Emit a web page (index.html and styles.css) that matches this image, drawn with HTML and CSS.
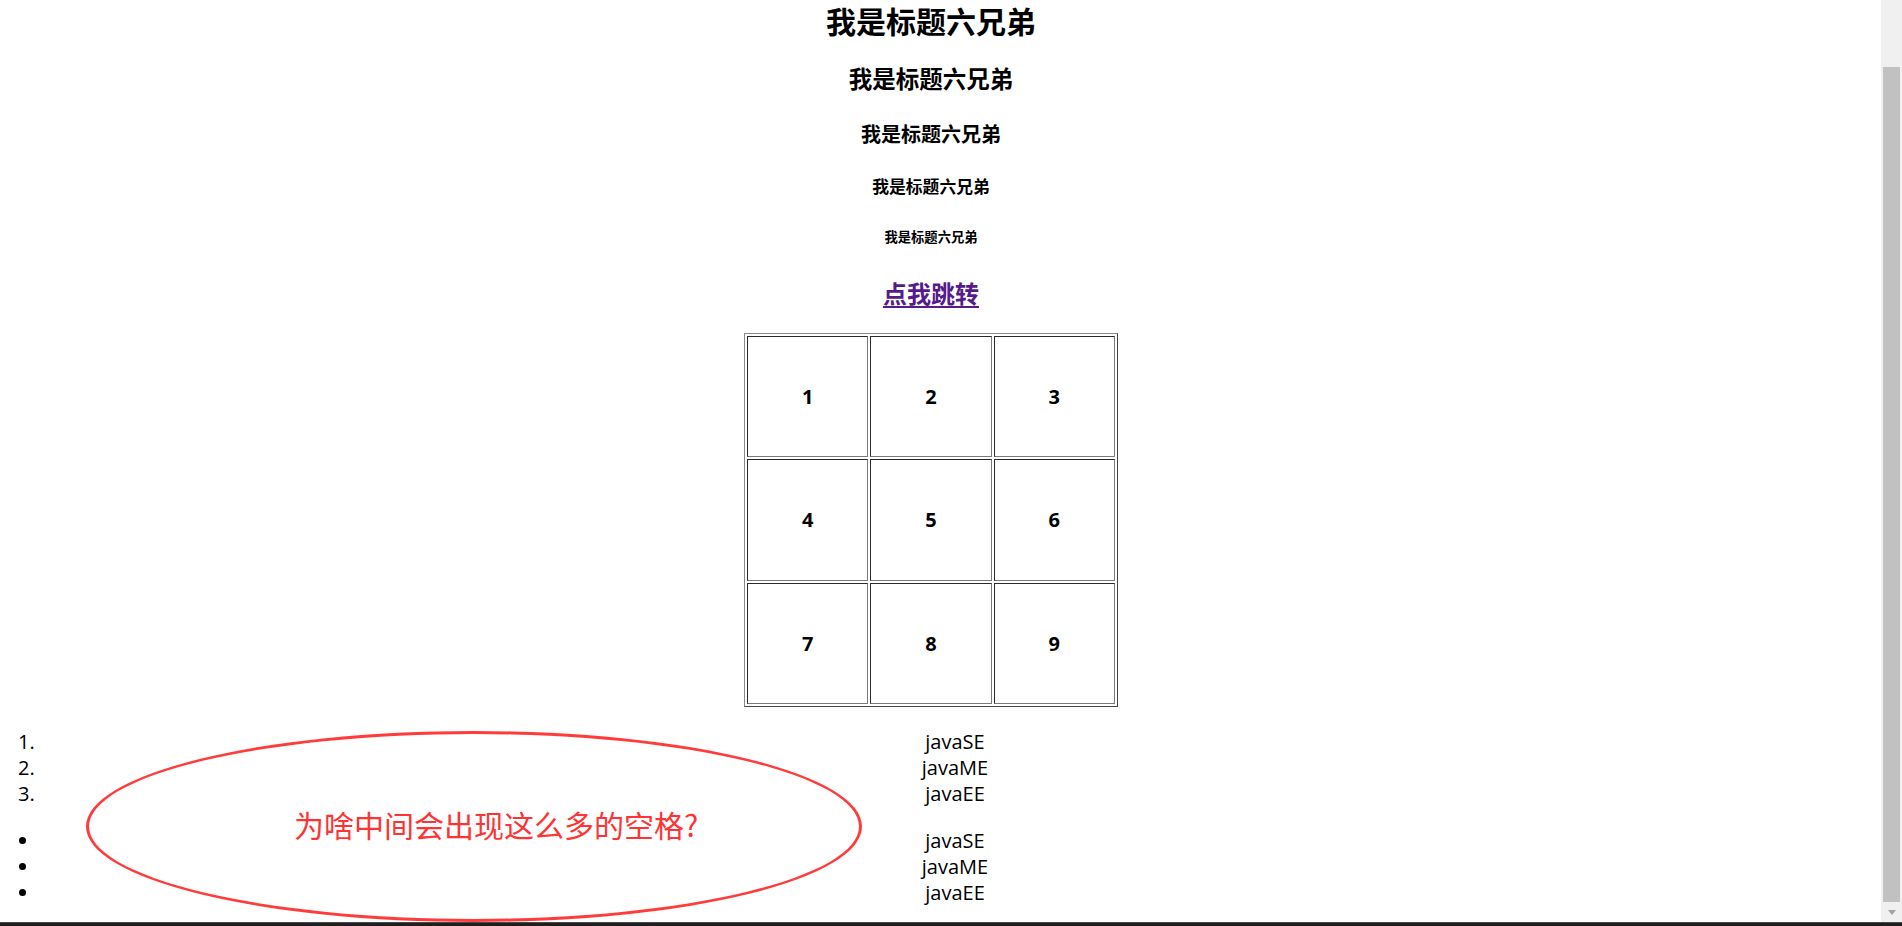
FILE: index.html
```
<!DOCTYPE html>
<html lang="zh-CN">
<head>
<meta charset="utf-8">
<title>标题六兄弟</title>
<link rel="stylesheet" href="styles.css">
</head>
<body>
<div class="screen">
  <div class="viewport">
    <main class="page">
      <section class="headings">
        <h1 class="h h1">我是标题六兄弟</h1>
        <h2 class="h h2">我是标题六兄弟</h2>
        <h3 class="h h3">我是标题六兄弟</h3>
        <h4 class="h h4">我是标题六兄弟</h4>
        <h5 class="h h5">我是标题六兄弟</h5>
        <h2 class="h jump"><a class="jump-link" href="#">点我跳转</a></h2>
      </section>
      <table class="grid">
        <tr><td class="cell">1</td><td class="cell">2</td><td class="cell">3</td></tr>
        <tr><td class="cell">4</td><td class="cell">5</td><td class="cell">6</td></tr>
        <tr><td class="cell">7</td><td class="cell">8</td><td class="cell">9</td></tr>
      </table>
      <ol class="list list-ordered">
        <li class="item">javaSE</li>
        <li class="item">javaME</li>
        <li class="item">javaEE</li>
      </ol>
      <ul class="list list-bullets">
        <li class="item">javaSE</li>
        <li class="item">javaME</li>
        <li class="item">javaEE</li>
      </ul>
      <div class="note-ring"></div>
      <div class="note-text">为啥中间会出现这么多的空格?</div>
    </main>
    <div class="scrollbar">
      <div class="thumb"></div>
      <div class="arrow-box"><div class="arrow-down"></div></div>
    </div>
  </div>
  <div class="taskbar"></div>
</div>
</body>
</html>
```
FILE: styles.css
```
html, body {
  margin: 0;
  padding: 0;
  background: #ffffff;
}

body {
  font-family: "Open Sans", "Noto Sans CJK SC", sans-serif;
  color: #000000;
}

.screen {
  width: 1902px;
  height: 926px;
  display: flex;
  flex-direction: column;
  overflow: hidden;
}

.viewport {
  height: 922px;
  display: flex;
  flex-direction: row;
}

.page {
  flex: 1;
  position: relative;
  overflow: hidden;
  background: #ffffff;
}

.headings {
  padding: 0 27px 0 8px;
  display: flex;
  flex-direction: column;
  text-align: center;
}

.h {
  margin: 0;
  line-height: 40px;
  font-family: "Noto Sans CJK SC", sans-serif;
  font-weight: 700;
}

.h1 { font-size: 30px; margin-bottom: 18px; }
.h2 { font-size: 23.5px; margin-bottom: 16px; }
.h3 { font-size: 20px; margin-bottom: 12px; }
.h4 { font-size: 16.8px; margin-bottom: 11px; }
.h5 { font-size: 13.3px; margin-bottom: 16px; }
.jump { font-size: 24px; margin-bottom: 20px; }

.jump-link {
  color: #551a8b;
  text-decoration: underline;
  text-underline-offset: 3px;
}

.grid {
  width: 374px;
  height: 374px;
  margin: 0 0 0 744px;
  border-collapse: separate;
  border-spacing: 2px;
  border-style: solid;
  border-width: 1px;
  border-color: #8a8a8a #444444 #444444 #8a8a8a;
}

.cell {
  padding: 0;
  text-align: center;
  vertical-align: middle;
  font-size: 20px;
  font-weight: 700;
  border-style: solid;
  border-width: 1px;
  border-color: #2a2a2a #7a7a7a #7a7a7a #2a2a2a;
}

.list {
  margin: 22px 11px 0 0;
  padding: 0 0 0 40px;
  font-size: 20px;
  line-height: 26px;
}

.list-bullets {
  margin-top: 21px;
}

.item {
  text-align: center;
}

.note-ring {
  position: absolute;
  left: 86px;
  top: 731px;
  width: 770px;
  height: 185px;
  border: 3px solid #ff3b3b;
  border-radius: 50%;
}

.note-text {
  position: absolute;
  left: 294px;
  top: 804px;
  line-height: 40px;
  font-size: 30px;
  color: #ff3333;
  font-family: "Noto Sans CJK SC", sans-serif;
  white-space: nowrap;
}

.scrollbar {
  width: 21px;
  background: #f0f0f0;
  display: flex;
  flex-direction: column;
  padding-top: 67px;
  box-sizing: border-box;
}

.thumb {
  flex: 1;
  margin: 0 2px;
  background: #c1c1c1;
}

.arrow-box {
  height: 20px;
  display: flex;
  justify-content: center;
  align-items: center;
}

.arrow-down {
  width: 0;
  height: 0;
  border-left: 4px solid transparent;
  border-right: 4px solid transparent;
  border-top: 5px solid #a3a3a3;
}

.taskbar {
  height: 4px;
  background: #1e1e1e;
  border-top: 1px solid #4a4a4a;
  box-sizing: border-box;
}
```
